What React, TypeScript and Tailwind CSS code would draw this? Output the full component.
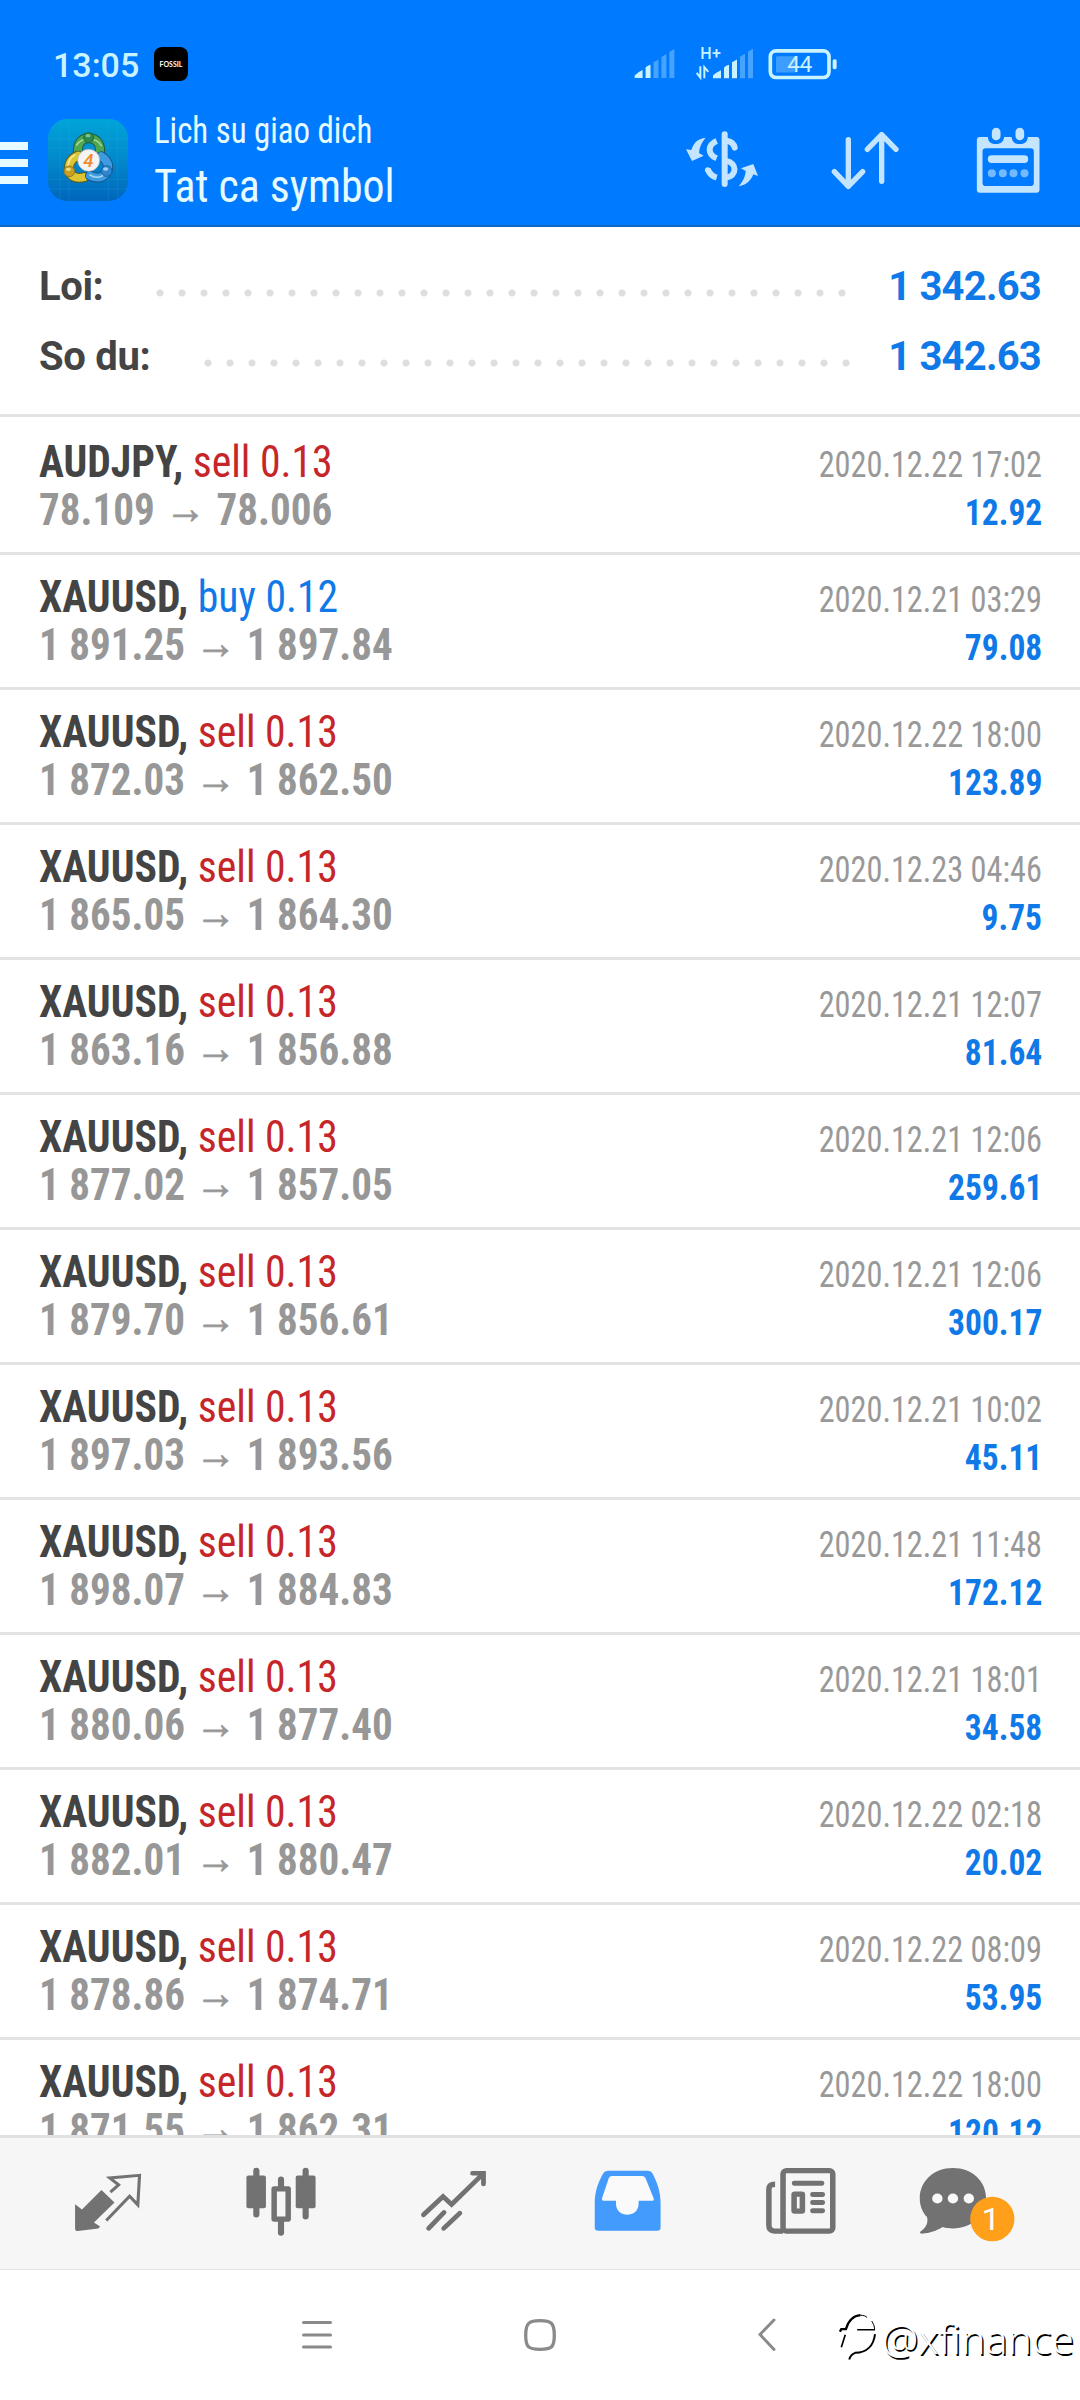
import { clsx } from 'clsx';

interface Deal {
  symbol: string;
  side: 'buy' | 'sell';
  volume: string;
  open: string;
  close: string;
  time: string;
  profit: string;
}

const deals: Deal[] = [
  { symbol: 'AUDJPY', side: 'sell', volume: '0.13', open: '78.109', close: '78.006', time: '2020.12.22 17:02', profit: '12.92' },
  { symbol: 'XAUUSD', side: 'buy', volume: '0.12', open: '1 891.25', close: '1 897.84', time: '2020.12.21 03:29', profit: '79.08' },
  { symbol: 'XAUUSD', side: 'sell', volume: '0.13', open: '1 872.03', close: '1 862.50', time: '2020.12.22 18:00', profit: '123.89' },
  { symbol: 'XAUUSD', side: 'sell', volume: '0.13', open: '1 865.05', close: '1 864.30', time: '2020.12.23 04:46', profit: '9.75' },
  { symbol: 'XAUUSD', side: 'sell', volume: '0.13', open: '1 863.16', close: '1 856.88', time: '2020.12.21 12:07', profit: '81.64' },
  { symbol: 'XAUUSD', side: 'sell', volume: '0.13', open: '1 877.02', close: '1 857.05', time: '2020.12.21 12:06', profit: '259.61' },
  { symbol: 'XAUUSD', side: 'sell', volume: '0.13', open: '1 879.70', close: '1 856.61', time: '2020.12.21 12:06', profit: '300.17' },
  { symbol: 'XAUUSD', side: 'sell', volume: '0.13', open: '1 897.03', close: '1 893.56', time: '2020.12.21 10:02', profit: '45.11' },
  { symbol: 'XAUUSD', side: 'sell', volume: '0.13', open: '1 898.07', close: '1 884.83', time: '2020.12.21 11:48', profit: '172.12' },
  { symbol: 'XAUUSD', side: 'sell', volume: '0.13', open: '1 880.06', close: '1 877.40', time: '2020.12.21 18:01', profit: '34.58' },
  { symbol: 'XAUUSD', side: 'sell', volume: '0.13', open: '1 882.01', close: '1 880.47', time: '2020.12.22 02:18', profit: '20.02' },
  { symbol: 'XAUUSD', side: 'sell', volume: '0.13', open: '1 878.86', close: '1 874.71', time: '2020.12.22 08:09', profit: '53.95' },
  { symbol: 'XAUUSD', side: 'sell', volume: '0.13', open: '1 871.55', close: '1 862.31', time: '2020.12.22 18:00', profit: '120.12' },
];

function StatusBar() {
  return (
    <div className="flex h-[50px] items-center pl-[53px] text-[#c9f3ff]">
      <span className="w-[101px] text-[34px] leading-[40px] font-medium">13:05</span>
      <div className="-mt-[2px] flex h-[34px] w-[34px] items-center justify-center rounded-[8px] bg-black pt-px font-['Lato'] text-[7px] font-bold text-white">
        FOSSIL
      </div>
      {/* SIM 1 */}
      <svg viewBox="100 75 130 110" className="-mt-[3px] ml-[445px] h-[37px] w-[43px]" fill="currentColor">
        <path d="M105 174v-8q10-10 24-16v24zM138 174v-32q6-6 15-8v40z" />
        <path opacity=".35" d="M162 174v-48l15-8v56zM186 174v-64l15-9v73zM210 174V95l15-9v88z" />
      </svg>
      {/* SIM 2 */}
      <svg viewBox="285 75 180 110" className="-mt-[3px] ml-[19px] h-[37px] w-[60px]" fill="currentColor">
        <text x="301" y="116" fontSize="48" fontWeight="500" textLength="62">H+</text>
        <path fill="none" stroke="currentColor" strokeWidth="6" d="M301 138v34L290 158M313 174v-33l12 14" />
        <path d="M339 174v-8q10-10 24-16v24zM372 174v-32q6-6 15-8v40zM396 174v-48l15-8v56z" />
        <path opacity=".35" d="M420 174v-64l15-9v73zM444 174V95l15-9v88z" />
      </svg>
      {/* Battery */}
      <svg viewBox="505 75 210 110" className="-mt-[3px] ml-[13px] h-[37px] w-[70px]" fill="currentColor">
        <rect x="512" y="92" width="176" height="80" rx="17" fill="none" stroke="currentColor" strokeWidth="11" />
        <rect x="529" y="108" width="62" height="49" rx="4" opacity=".3" />
        <rect x="699" y="117" width="12" height="30" rx="5" />
        <text x="563" y="157" fontSize="68" textLength="75">44</text>
      </svg>
    </div>
  );
}

function AppIcon() {
  return (
    <svg viewBox="24 28 240 246" className="h-[82px] w-[80px]">
      <defs>
        <linearGradient id="tile" x1="0" y1="0" x2="0" y2="1">
          <stop offset="0" stopColor="#00a5d8" />
          <stop offset=".5" stopColor="#0288cc" />
          <stop offset="1" stopColor="#0066bb" />
        </linearGradient>
      </defs>
      <rect x="24" y="28" width="240" height="246" rx="58" fill="url(#tile)" />
      <path d="M60 30v242M87 30v242M205 30v242M232 30v242M24 88h240M24 115h240M24 210h240M24 238h240" stroke="#39b6ea" strokeWidth="1.5" opacity=".35" />
      <g fill="none" strokeLinecap="round" strokeLinejoin="round">
        <path d="M116 140c-8-34 6-54 30-55 26 1 40 22 32 52" stroke="#1f5f45" strokeWidth="30" />
        <path d="M116 140c-8-34 6-54 30-55 26 1 40 22 32 52" stroke="#4fa653" strokeWidth="24" />
        <path d="M110 106c8-12 20-18 36-18s30 6 38 20" stroke="#a6d78e" strokeWidth="5" />
        <path d="M114 138c-20 8-30 24-26 46 6 20 26 24 46 18" stroke="#5c5a20" strokeWidth="30" />
        <path d="M114 138c-20 8-30 24-26 46 6 20 26 24 46 18" stroke="#dcc433" strokeWidth="24" />
        <path d="M104 136c-14 8-20 20-20 36" stroke="#f8ec8c" strokeWidth="5" />
        <path d="M184 140c18 12 24 28 18 44-10 22-32 24-52 14" stroke="#14538c" strokeWidth="30" />
        <path d="M184 140c18 12 24 28 18 44-10 22-32 24-52 14" stroke="#3f9be0" strokeWidth="24" />
        <path d="M150 196c16 10 34 8 46-4" stroke="#a5d8f8" strokeWidth="5" />
      </g>
      <g strokeWidth="3">
        <circle cx="146" cy="84" r="15" fill="#2c8a4c" stroke="#1b6b3e" />
        <circle cx="88" cy="185" r="16" fill="#c79f22" stroke="#93781b" />
        <circle cx="200" cy="184" r="16" fill="#2f86cf" stroke="#1b609c" />
      </g>
      <ellipse cx="144" cy="78" rx="8" ry="5" fill="#bfe8b8" opacity=".6" />
      <ellipse cx="85" cy="179" rx="8" ry="5" fill="#fff3a8" opacity=".7" />
      <ellipse cx="197" cy="178" rx="8" ry="5" fill="#d2efff" opacity=".7" />
      <circle cx="146" cy="152" r="33" fill="#f4f4f2" stroke="#a9b4b4" strokeWidth="2" />
      <text x="145" y="172" fontSize="56" fontWeight="500" textAnchor="middle" fill="#f08a2a" className="italic">4</text>
    </svg>
  );
}

function Header() {
  return (
    <header className="flex h-[227px] flex-col border-b-2 border-[#1368c4] bg-[#007aff] pt-[40px]">
      <StatusBar />
      <div className="flex items-start text-[#e6fbff]">
        <div className="mt-[52px] flex w-[28px] flex-col gap-[9px]">
          <div className="h-[8px] bg-current" />
          <div className="h-[8px] bg-current" />
          <div className="h-[8px] bg-current" />
        </div>
        <div className="mt-[29px] ml-[20px]">
          <AppIcon />
        </div>
        <div className="mt-[17px] ml-[26px] w-[531px] font-['Roboto_Condensed',Roboto,sans-serif]">
          <div className="origin-left scale-x-[0.912] text-[36px] leading-[48px]">Lich su giao dich</div>
          <div className="mt-px origin-left scale-x-[0.953] text-[46px] leading-[60px]">Tat ca symbol</div>
        </div>
        <div className="mt-[35px] flex text-[#c4e5ff]">
          <svg viewBox="255 315 225 210" className="h-[70px] w-[75px]" fill="none" stroke="currentColor" strokeWidth="18">
            <path strokeLinecap="round" d="M374 343v149" />
            <path d="M350 363c-28 12-28 40 0 52M350 473c-14-4-22-12-27-26" />
            <path strokeLinecap="round" d="M382 363c12 2 20 10 22 20" />
            <path d="M378 423c34 4 34 46 0 50" />
            <circle cx="323" cy="450" r="8" fill="currentColor" stroke="none" />
            <path fill="currentColor" stroke="none" d="M317 353c-22 2-36 14-43 37l-16-2 18 35 35-16-14-8c1-18 8-32 20-46zM416 499c24-4 37-18 44-36l14 5-14-36-37 13 14 8c-1 18-9 32-21 46z" />
          </svg>
          <svg viewBox="690 315 210 210" className="ml-[70px] h-[70px] w-[70px]" fill="none" stroke="currentColor" strokeWidth="16" strokeLinecap="round" strokeLinejoin="round">
            <path d="M745 359v140M703 455l42 44 43-44M845 484V344M802 388l43-44 43 44" />
          </svg>
          <svg viewBox="1125 315 200 210" className="ml-[75px] h-[70px] w-[67px]" fill="currentColor">
            <path fillRule="evenodd" d="M1139 351h24c2 18 12 21 24 21s22-3 25-21h22c3 18 13 21 25 21s22-3 24-21h26q9 0 9 9v149q0 9-9 9h-170q-9 0-9-9V360q0-9 9-9zM1157 385q-10 0-10 10v93q0 10 10 10h134q10 0 10-10v-93q0-10-10-10z" />
            <rect x="1175" y="323" width="26" height="38" rx="13" />
            <rect x="1246" y="323" width="26" height="38" rx="13" />
            <rect x="1163" y="406" width="121" height="23" rx="11" />
            <g opacity=".6">
              <circle cx="1175" cy="460" r="12" />
              <circle cx="1208" cy="460" r="12" />
              <circle cx="1240" cy="460" r="12" />
              <circle cx="1273" cy="460" r="12" />
            </g>
          </svg>
        </div>
      </div>
    </header>
  );
}

function Summary() {
  return (
    <section className="flex h-[190px] flex-col border-b-3 border-[#e3e3e3] pt-[25px] pr-[39px] pl-[39px] text-[40px] leading-[70px] font-bold">
      <div className="flex items-center">
        <span className="tracking-[-0.4px] text-[#444]">Loi:</span>
        <span className="mt-[11px] mr-[34px] ml-auto h-[8px] w-[704px] bg-[radial-gradient(circle,#dedede_3px,transparent_4px)] bg-[length:22px_8px]" />
        <span className="w-[154px] text-right tracking-[-0.8px] text-[#1079e8]">1 342.63</span>
      </div>
      <div className="flex items-center">
        <span className="tracking-[-0.3px] text-[#444]">So du:</span>
        <span className="mt-[11px] mr-[30px] ml-auto h-[8px] w-[660px] bg-[radial-gradient(circle,#dedede_3px,transparent_4px)] bg-[length:22px_8px]" />
        <span className="w-[154px] text-right tracking-[-0.8px] text-[#1079e8]">1 342.63</span>
      </div>
    </section>
  );
}

function DealRow({ deal }: { deal: Deal }) {
  return (
    <li className="h-[135px] shrink-0 border-b-3 border-[#e3e3e3] pt-[18px] pr-[38px] pl-[39px] font-['Roboto_Condensed',Roboto,sans-serif] text-[44px] leading-[48px] first:h-[138px] first:pt-[21px]">
      <div className="flex h-[48px] items-baseline justify-between">
        <span className="origin-left scale-x-[0.947]">
          <span className="font-bold text-[#444]">{deal.symbol}, </span>
          <span className={clsx(deal.side === 'sell' ? 'text-[#c6262a]' : 'text-[#1079e8]')}>
            {deal.side} {deal.volume}
          </span>
        </span>
        <span className="origin-right scale-x-[0.897] text-[36px] leading-[42px] text-[#999]">{deal.time}</span>
      </div>
      <div className="flex h-[48px] items-baseline justify-between">
        <span className="origin-left scale-x-[0.934] font-bold text-[#979797]">
          {deal.open}
          <span className="relative -top-[2px] px-[11px] font-normal [-webkit-text-stroke:0.7px_#979797]">→</span>
          {deal.close}
        </span>
        <span className="origin-right scale-x-[0.93] text-[36px] leading-[42px] font-bold text-[#1079e8]">{deal.profit}</span>
      </div>
    </li>
  );
}

function TabBar() {
  return (
    <nav className="grid h-[135px] shrink-0 grid-cols-6 border-t-3 border-b border-[#e1e1e1] bg-[#f6f6f6] pt-[27px] pr-[19px] pl-[21px] text-[#727272]">
      {/* Quotes */}
      <svg viewBox="210 435 210 220" preserveAspectRatio="none" className="mx-auto h-[73px] w-[72px]">
        <path d="M219 553l20 16 57-59 38 38-60 60 18 12-5 6-60 8q-8 0-8-8z" fill="currentColor" />
        <path d="M322 517l24-22-26-21 87-8-5 89-24-26-68 73" fill="none" stroke="currentColor" strokeWidth="9" />
      </svg>
      {/* Charts */}
      <svg viewBox="705 435 222 220" preserveAspectRatio="none" className="mx-auto h-[73px] w-[76px]" fill="currentColor">
        <rect x="715" y="467" width="57" height="98" rx="6" />
        <rect x="859" y="467" width="58" height="98" rx="6" />
        <path d="M744 452v132M888 452v138M816 479v24M816 604v35" fill="none" stroke="currentColor" strokeWidth="18" strokeLinecap="round" />
        <rect x="796" y="507" width="41" height="91" fill="none" stroke="currentColor" strokeWidth="16" strokeLinejoin="round" />
      </svg>
      {/* Trade */}
      <svg viewBox="1215 435 210 220" preserveAspectRatio="none" className="mx-auto h-[73px] w-[72px]" fill="none" stroke="currentColor" strokeWidth="14" strokeLinecap="round">
        <path d="M1231 585l57-55 25 24 90-91M1374 460h32v32M1246 626l45-48M1290 626l47-46" />
      </svg>
      {/* History */}
      <svg viewBox="150 435 210 220" preserveAspectRatio="none" className="mx-auto h-[73px] w-[72px] text-[#429bfd]" fill="currentColor">
        <path fill="#fafafa" d="M205 462h104l26 84-38 40h-84l-38-40z" />
        <path fillRule="evenodd" d="M198 452h114q10 0 15 9c14 28 23 56 23 88v74q0 10-10 10H168q-10 0-10-10v-74c0-32 9-60 24-88q5-9 16-9zM208 468q-7 0-9 6l-20 62q-1 7 5 7h36v9c0 44 66 44 66 0v-9h38q8 0 6-7l-24-62q-3-6-10-6z" />
      </svg>
      {/* News */}
      <svg viewBox="648 435 220 220" preserveAspectRatio="none" className="mx-auto h-[73px] w-[76px]" fill="none" stroke="currentColor" strokeWidth="16" strokeLinecap="round">
        <rect x="706" y="452" width="144" height="182" rx="10" />
        <path d="M739 490h79M792 524h28M792 548h28M792 573h28" strokeWidth="15" />
        <rect x="738" y="523" width="24" height="51" rx="2" strokeLinejoin="round" />
        <path d="M683 493c-13 0-18 5-18 16v107q0 18 16 18h25" strokeLinecap="butt" />
      </svg>
      {/* Chat */}
      <svg viewBox="1095 435 330 220" preserveAspectRatio="none" className="mx-auto h-[73px] w-[114px] overflow-visible" fill="currentColor">
        <path d="M1199 444c56 0 96 40 96 91s-40 91-96 91c-11 0-21-1-30-4-18 12-36 18-60 20-6 0-7-4-3-7 16-12 22-26 18-43-14-16-21-35-21-57 0-51 40-91 96-91z" />
        <circle cx="1154" cy="536" r="15" fill="#fafafa" />
        <circle cx="1199" cy="536" r="15" fill="#fafafa" />
        <circle cx="1245" cy="536" r="15" fill="#fafafa" />
        <ellipse cx="1313" cy="598" rx="64" ry="67" fill="#ff9f1a" />
        <text x="1309" y="632" fontSize="96" textAnchor="middle" fill="#fff">1</text>
      </svg>
    </nav>
  );
}

function SystemNav() {
  return (
    <div className="relative flex h-[130px] shrink-0 items-center bg-white pl-[302px] text-[#8a8a8a]">
      <svg viewBox="0 0 30 32" className="h-[32px] w-[30px]" stroke="currentColor" strokeWidth="3" strokeLinecap="round">
        <path d="M1.500 3.500h27M1.500 16h27M1.500 28h27" />
      </svg>
      <svg viewBox="0 0 32 32" className="ml-[192px] h-[32px] w-[32px]" fill="none" stroke="currentColor" strokeWidth="3.300">
        <path d="M16 1.700c11 0 14.300 2 14.300 14.300S28 30.300 16 30.300 1.700 28 1.700 16 5 1.700 16 1.700z" />
      </svg>
      <svg viewBox="0 0 18 34" className="ml-[202px] h-[34px] w-[18px]" fill="none" stroke="currentColor" strokeWidth="3" strokeLinecap="round">
        <path d="M16 2L2 16.500 16 31.500" />
      </svg>
      {/* Watermark */}
      <div className="absolute top-[43px] right-[6px] flex items-center text-white">
        <svg viewBox="175 148 115 150" className="-mt-[3px] h-[50px] w-[38px]" fill="none" stroke="#000">
          <path strokeWidth="7" d="M178 207l4-8h14c6-20 20-40 44-42" />
          <path strokeWidth="3" d="M240 157c10 0 16 3 20 7M274 175q8 10 9 24" />
          <path strokeWidth="5" d="M230 201h54M194 216l-12 38" />
          <path strokeWidth="6" d="M284 214c-4 34-24 56-60 57-10 4-16 12-18 20" />
        </svg>
        <span className="ml-[5px] font-['Noto_Sans',sans-serif] text-[41px] leading-[50px] font-light [text-shadow:1.500px_1.500px_0_#000]">@xfinance</span>
      </div>
    </div>
  );
}

export default function App() {
  return (
    <div className="flex h-[2400px] w-[1080px] flex-col overflow-hidden bg-white font-['Roboto',sans-serif]">
      <Header />
      <Summary />
      <ul className="flex min-h-0 flex-1 flex-col overflow-hidden">
        {deals.map((deal, i) => (
          <DealRow key={i} deal={deal} />
        ))}
      </ul>
      <TabBar />
      <SystemNav />
    </div>
  );
}
